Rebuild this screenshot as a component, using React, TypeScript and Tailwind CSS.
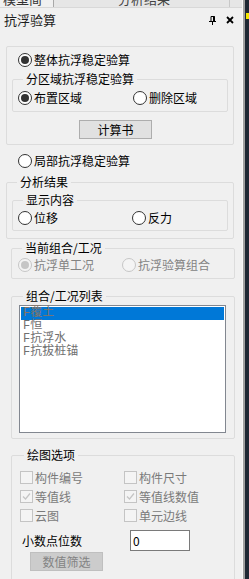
import React from "react";

interface RadioProps {
  label: string;
  checked?: boolean;
  disabled?: boolean;
}

function Radio({ label, checked, disabled }: RadioProps) {
  return (
    <div className="flex items-center h-[16px]">
      <span
        className={`w-[14px] h-[14px] rounded-full border flex items-center justify-center ${
          disabled ? "border-[#c6c6c6] bg-[#f4f4f4]" : "border-[#333333] bg-white"
        }`}
      >
        {checked && (
          <span
            className={`w-[8px] h-[8px] rounded-full ${disabled ? "bg-[#c6c6c6]" : "bg-[#333333]"}`}
          />
        )}
      </span>
      <span className={`ml-[2px] ${disabled ? "text-[#838383]" : "text-black"}`}>{label}</span>
    </div>
  );
}

function Check({ label, checked }: { label: string; checked?: boolean }) {
  return (
    <div className="flex items-center h-[19px]">
      <span className="w-[13px] h-[13px] border border-[#c4c4c4] bg-[#f4f4f4] flex items-center justify-center">
        {checked && (
          <svg width="9" height="9" viewBox="0 0 9 9">
            <path d="M1 4.5 L3.5 7 L8 1.5" fill="none" stroke="#c4c4c4" strokeWidth="1.2" />
          </svg>
        )}
      </span>
      <span className="ml-[2px] text-[#7a7a7a]">{label}</span>
    </div>
  );
}

export default function App() {
  return (
    <div className="w-[249px] h-[579px] overflow-hidden flex bg-[#f0f0f0] font-['Noto_Sans_CJK_SC',sans-serif] text-[12px] leading-[16px] text-black">
      <div className="w-[242px] h-[579px] overflow-hidden">
        {/* Tab strip, cut at the top */}
        <div className="h-[8px] flex bg-[#e6e6e6] border-b border-[#d8d8d8] overflow-hidden text-[13px] leading-[16px]">
          <div className="w-[54px] shrink-0 bg-[#f0f0f0] border-r border-[#a8a8a8] pl-[3px] -mt-[9px] h-[17px] text-[#333]">模型简图</div>
          <div className="w-[176px] shrink-0 border-r border-[#c8c8c8] pl-[64px] -mt-[9px] h-[17px] text-[#444]">分析结果</div>
        </div>

        {/* Title */}
        <div className="h-[22px] pt-[2px] flex items-center pl-[4px] pr-[8px]">
          <span className="text-[13px] text-[#1e1e1e]">抗浮验算</span>
          <div className="ml-auto flex items-center gap-[10px]">
            <svg width="7" height="9" viewBox="0 0 7 9">
              <path d="M2 0.5 H5.5 V5 M2 0.5 V5" fill="none" stroke="#000" strokeWidth="1" />
              <rect x="4" y="0.5" width="2" height="4.5" fill="#000" />
              <rect x="0" y="5" width="7" height="1" fill="#000" />
              <rect x="3" y="6" width="1" height="3" fill="#000" />
            </svg>
            <svg width="8" height="8" viewBox="0 0 8 8">
              <path d="M1 1 L7 7 M7 1 L1 7" stroke="#000" strokeWidth="1.8" />
            </svg>
          </div>
        </div>

        {/* 整体 / 分区域 */}
        <div className="ml-[6px] mt-[16px] w-[228px] border border-[#dcdcdc] rounded-[2px] pt-[5px] pb-[5px] px-[11px] flex flex-col">
          <Radio label="整体抗浮稳定验算" checked />
          <fieldset className="-ml-[6px] mt-[3px] w-[216px] border border-[#dcdcdc] rounded-[2px] pl-[5px] pb-[5px]">
            <legend className="ml-[5px] px-[3px] leading-[16px]">分区域抗浮稳定验算</legend>
            <div className="grid grid-cols-[115px_1fr] mt-[3px]">
              <Radio label="布置区域" checked />
              <Radio label="删除区域" />
            </div>
          </fieldset>
          <button className="self-start ml-[61px] mt-[8px] w-[73px] h-[19px] border border-[#adadad] bg-[#e1e1e1] text-black leading-[16px]">
            计算书
          </button>
        </div>

        <div className="ml-[18px] mt-[8px]">
          <Radio label="局部抗浮稳定验算" />
        </div>

        {/* 分析结果 */}
        <fieldset className="ml-[6px] mt-[5px] w-[228px] border border-[#dcdcdc] rounded-[2px] pl-[5px] pb-[7px]">
          <legend className="ml-[5px] px-[3px] leading-[16px]">分析结果</legend>
          <fieldset className="mt-[2px] w-[216px] border border-[#dcdcdc] rounded-[2px] pl-[5px] pb-[4px]">
            <legend className="ml-[5px] px-[3px] leading-[16px]">显示内容</legend>
            <div className="grid grid-cols-[114px_1fr] mt-[2px]">
              <Radio label="位移" />
              <Radio label="反力" />
            </div>
          </fieldset>
        </fieldset>

        {/* 当前组合/工况 */}
        <fieldset className="ml-[11px] mt-[1px] w-[224px] border border-[#dcdcdc] rounded-[2px] pl-[6px] pb-[5px]">
          <legend className="ml-[4px] px-[3px] leading-[16px]">当前组合/工况</legend>
          <div className="grid grid-cols-[104px_1fr] mt-[1px]">
            <Radio label="抗浮单工况" checked disabled />
            <Radio label="抗浮验算组合" disabled />
          </div>
        </fieldset>

        {/* 组合/工况列表 */}
        <fieldset className="ml-[11px] mt-[9px] w-[224px] border border-[#dcdcdc] rounded-[2px] pl-[7px] pb-[5px]">
          <legend className="ml-[4px] px-[3px] leading-[16px]">组合/工况列表</legend>
          <div className="mt-[1px] w-[207px] h-[128px] border border-[#828790] bg-white p-[1px] font-['Liberation_Mono','Noto_Sans_CJK_SC',monospace] text-[12px] leading-[13px]">
            <div className="h-[13px] bg-[#0078d7] pl-[2px] text-[#857565]">F覆土</div>
            <div className="h-[13px] pl-[2px] text-[#707070]">F恒</div>
            <div className="h-[13px] pl-[2px] text-[#707070]">F抗浮水</div>
            <div className="h-[13px] pl-[2px] text-[#707070]">F抗拔桩锚</div>
          </div>
        </fieldset>

        {/* 绘图选项 */}
        <fieldset className="ml-[11px] mt-[8px] w-[224px] h-[160px] border border-[#dcdcdc] rounded-[2px] pl-[8px]">
          <legend className="ml-[4px] px-[3px] leading-[16px]">绘图选项</legend>
          <div className="grid grid-cols-[104px_1fr] mt-[5px]">
            <Check label="构件编号" />
            <Check label="构件尺寸" />
            <Check label="等值线" checked />
            <Check label="等值线数值" checked />
            <Check label="云图" />
            <Check label="单元边线" />
          </div>
          <div className="flex items-center mt-[5px] h-[21px]">
            <span className="ml-[2px] w-[108px]">小数点位数</span>
            <div className="w-[60px] h-[21px] border border-[#7a7a7a] bg-white pl-[2px] leading-[19px]">0</div>
          </div>
          <button className="ml-[10px] mt-[1px] w-[73px] h-[19px] border border-[#bfbfbf] bg-[#cccccc] text-[#838383] leading-[16px]">
            数值筛选
          </button>
        </fieldset>
      </div>

      {/* Neighbour window edge */}
      <div className="flex-1 flex">
        <div className="w-[1px] bg-[#f8f8f8]" />
        <div className="w-[2px] bg-[#a0a0a0]" />
        <div className="flex-1 bg-[#1e2733] pt-[13px] pl-[1px]">
          <div className="w-[3px] h-[6px] bg-[#f3e600]" />
        </div>
      </div>
    </div>
  );
}
